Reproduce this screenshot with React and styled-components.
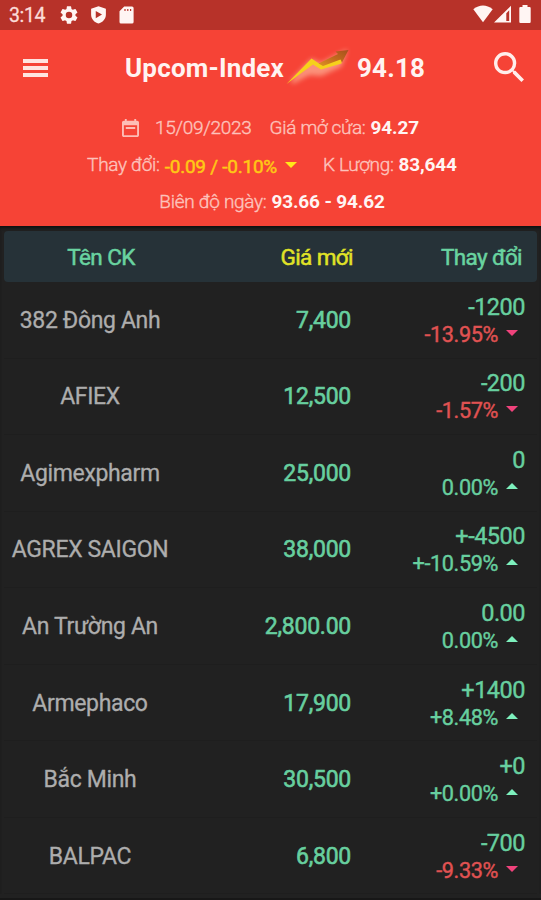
import React from 'react';
import styled, { createGlobalStyle } from 'styled-components';

const stocks = [
  { name: '382 Đông Anh', price: '7,400', change: '-1200', percent: '-13.95%', down: true },
  { name: 'AFIEX', price: '12,500', change: '-200', percent: '-1.57%', down: true },
  { name: 'Agimexpharm', price: '25,000', change: '0', percent: '0.00%' },
  { name: 'AGREX SAIGON', price: '38,000', change: '+-4500', percent: '+-10.59%' },
  { name: 'An Trường An', price: '2,800.00', change: '0.00', percent: '0.00%' },
  { name: 'Armephaco', price: '17,900', change: '+1400', percent: '+8.48%' },
  { name: 'Bắc Minh', price: '30,500', change: '+0', percent: '+0.00%' },
  { name: 'BALPAC', price: '6,800', change: '-700', percent: '-9.33%', down: true },
];

function TrendArrow() {
  return (
    <TrendSvg viewBox="0 0 66 44">
      <defs>
        <linearGradient id="shade" x1="0" y1="1" x2="1" y2="0">
          <stop offset="0" stopColor="#dd9322" />
          <stop offset="0.5" stopColor="#c26a1e" />
          <stop offset="1" stopColor="#a8501d" />
        </linearGradient>
        <filter id="glow" x="-20%" y="-30%" width="140%" height="170%">
          <feGaussianBlur stdDeviation="2.8" />
        </filter>
      </defs>
      <path
        d="M7 36 L27 15 L36 19 L59 7 L55 19 L36 28 L24 27 Z"
        fill="#ffc6a8"
        stroke="#ffc6a8"
        strokeWidth="4"
        opacity="0.6"
        filter="url(#glow)"
      />
      <path d="M1.5 38 L26.5 12.5 L34 17.5 L57 12 L56.5 17.5 L36 23.5 L28 18.5 Z" fill="#f6d11b" />
      <path d="M33.5 17.5 L53 8 L50.5 5.5 L63.5 4 L57 16.5 L55.5 13.5 L38 20 Z" fill="url(#shade)" />
    </TrendSvg>
  );
}

function App() {
  return (
    <Screen>
      <GlobalStyle />
      <StatusBar>
        <Clock>3:14</Clock>
        <StatusIcons>
          <StatusSvg viewBox="2 2 20 20" $w={18}>
            <path d="M19.14 12.94c.04-.3.06-.61.06-.94 0-.32-.02-.64-.07-.94l2.03-1.58a.49.49 0 0 0 .12-.61l-1.92-3.32a.488.488 0 0 0-.59-.22l-2.39.96c-.5-.38-1.03-.7-1.62-.94l-.36-2.54a.484.484 0 0 0-.48-.41h-3.84c-.24 0-.43.17-.47.41l-.36 2.54c-.59.24-1.13.57-1.62.94l-2.39-.96c-.22-.08-.47 0-.59.22L2.74 8.87c-.12.21-.08.47.12.61l2.03 1.58c-.05.3-.09.63-.09.94s.02.64.07.94l-2.03 1.58a.49.49 0 0 0-.12.61l1.92 3.32c.12.22.37.29.59.22l2.39-.96c.5.38 1.03.7 1.62.94l.36 2.54c.05.24.24.41.48.41h3.84c.24 0 .44-.17.47-.41l.36-2.54c.59-.24 1.13-.56 1.62-.94l2.39.96c.22.08.47 0 .59-.22l1.92-3.32c.12-.22.07-.47-.12-.61l-2.01-1.58zM12 15.6A3.6 3.6 0 1 1 12 8.4a3.6 3.6 0 0 1 0 7.2z" />
          </StatusSvg>
          <StatusSvg viewBox="0 0 17 19" $w={17}>
            <path
              fillRule="evenodd"
              d="M8.5 0.3 L16.3 3 V9 C16.3 13.8 12.8 17.4 8.5 18.6 C4.2 17.4 0.7 13.8 0.7 9 V3 Z M5.6 5.2 V13 L12.2 9.1 Z"
            />
          </StatusSvg>
          <StatusSvg viewBox="0 0 15 18" $w={15}>
            <path
              fillRule="evenodd"
              d="M5.2 0.5 H13 Q14.6 0.5 14.6 2 V16 Q14.6 17.5 13 17.5 H2 Q0.5 17.5 0.5 16 V5.3 Z M5.4 3 V5 H6.6 V3 Z M8.2 3 V5 H9.4 V3 Z M11 3 V5 H12.2 V3 Z"
            />
          </StatusSvg>
        </StatusIcons>
        <SignalIcons>
          <StatusSvg viewBox="0 0 20 18" $w={20}>
            <path d="M0.3 4.3 Q10 -3.2 19.7 4.3 L10 17.3 Z" />
          </StatusSvg>
          <StatusSvg viewBox="0 0 17 17" $w={17}>
            <path fillRule="evenodd" d="M0 17 L17 0.3 V17 Z M12.3 7.8 V15.4 H15.2 V4.8 Z" />
          </StatusSvg>
          <StatusSvg viewBox="0 0 12 18" $w={12}>
            <path d="M3.5 0 H8.5 V2 H10.6 Q11.7 2 11.7 3.2 V16.8 Q11.7 18 10.6 18 H1.4 Q0.3 18 0.3 16.8 V3.2 Q0.3 2 1.4 2 H3.5 Z" />
          </StatusSvg>
        </SignalIcons>
      </StatusBar>

      <Header>
        <TopBar>
          <MenuIcon>
            <MenuLine />
            <MenuLine />
            <MenuLine />
          </MenuIcon>
          <Title>
            <TitleText $w={160} $spacing={0.2}>Upcom-Index</TitleText>
            <TrendArrow />
            <TitleText $w={69} $spacing={0.2}>94.18</TitleText>
          </Title>
          <SearchSvg viewBox="3 3 17.5 17.5">
            <path d="M15.5 14h-.79l-.28-.27A6.47 6.47 0 0 0 16 9.5 6.5 6.5 0 1 0 9.5 16c1.61 0 3.09-.59 4.23-1.57l.27.28v.79l5 4.99L20.49 19l-4.99-5zm-6 0C7.01 14 5 11.99 5 9.5S7.01 5 9.5 5 14 7.01 14 9.5 11.99 14 9.5 14z" />
          </SearchSvg>
        </TopBar>
        <Details>
          <DetailLine>
            <CalendarSvg viewBox="3 1 18 20" preserveAspectRatio="none">
              <path d="M17 12H7v-2h10v2zm2-9h-1V1h-2v2H8V1H6v2H5c-1.11 0-2 .9-2 2v14c0 1.1.89 2 2 2h14c1.1 0 2-.9 2-2V5c0-1.1-.9-2-2-2zm0 16H5V8h14v11z" />
            </CalendarSvg>
            <Label>15/09/2023</Label>
            <Label $left={18}>Giá mở cửa:</Label>
            <Value>94.27</Value>
          </DetailLine>
          <DetailLine>
            <Label>Thay đổi:</Label>
            <Delta>-0.09 / -0.10%</Delta>
            <Triangle $down $color="#ffe81a" />
            <Label $left={26}>K Lượng:</Label>
            <Value>83,644</Value>
          </DetailLine>
          <DetailLine>
            <Label>Biên độ ngày:</Label>
            <Value>93.66 - 94.62</Value>
          </DetailLine>
        </Details>
      </Header>

      <Table>
        <TableHead>
          <HeadName>Tên CK</HeadName>
          <HeadPrice>Giá mới</HeadPrice>
          <HeadChange>Thay đổi</HeadChange>
        </TableHead>
        {stocks.map((stock) => (
          <Row key={stock.name}>
            <Name>{stock.name}</Name>
            <Price>{stock.price}</Price>
            <Change>
              <Amount>{stock.change}</Amount>
              <Percent $down={stock.down}>
                {stock.percent}
                <Triangle $down={stock.down} $color={stock.down ? '#f0437c' : '#7df0bd'} />
              </Percent>
            </Change>
          </Row>
        ))}
      </Table>
    </Screen>
  );
}

export default App;

const GlobalStyle = createGlobalStyle`
  * {
    box-sizing: border-box;
  }
  body {
    margin: 0;
    background: #212121;
  }
`;
const Screen = styled.div`
  width: 541px;
  height: 900px;
  overflow: hidden;
  display: flex;
  flex-direction: column;
  background: #212121;
  border-bottom: 2px solid #171717;
  font-family: Roboto, 'Liberation Sans', sans-serif;
  white-space: nowrap;
`;
const StatusBar = styled.div`
  height: 30px;
  flex: none;
  display: flex;
  align-items: center;
  padding: 0 9px;
  background: #b73229;
`;
const Clock = styled.span`
  width: 51px;
  padding-top: 1px;
  color: #fbdcd8;
  font-size: 19.5px;
  letter-spacing: -0.4px;
  line-height: 30px;
  -webkit-text-stroke: 0.3px;
`;
const StatusIcons = styled.div`
  display: flex;
  align-items: center;
  gap: 12px;
  padding-bottom: 1px;
`;
const SignalIcons = styled.div`
  display: flex;
  align-items: center;
  gap: 1px;
  margin-left: auto;
  margin-right: 1px;
  padding-bottom: 2px;

  svg:last-child {
    margin-left: 7px;
  }
`;
const StatusSvg = styled.svg`
  width: ${(props) => props.$w}px;
  height: 18px;
  fill: #fff5f3;
`;
const Header = styled.header`
  height: 196px;
  flex: none;
  background: #f64336;
`;
const TopBar = styled.div`
  height: 76px;
  display: flex;
  align-items: center;
  padding: 0 17px 0 23px;
`;
const MenuIcon = styled.div`
  width: 25px;
  display: flex;
  flex-direction: column;
  gap: 3px;
  margin-bottom: 1px;
`;
const MenuLine = styled.div`
  height: 4px;
  background: #ffe4e0;
`;
const Title = styled.div`
  display: flex;
  align-items: center;
  margin-left: 77px;
`;
const TitleText = styled.span`
  width: ${(props) => props.$w}px;
  color: #fff3f1;
  font-size: 26px;
  font-weight: bold;
  letter-spacing: ${(props) => props.$spacing || 0}px;
`;
const TrendSvg = styled.svg`
  width: 66px;
  height: 44px;
  margin-right: 6px;
`;
const SearchSvg = styled.svg`
  width: 30px;
  height: 30px;
  margin-left: auto;
  margin-bottom: 2px;
  fill: #ffeeeb;
`;
const Details = styled.div`
  display: flex;
  flex-direction: column;
  padding-top: 3px;
`;
const DetailLine = styled.div`
  height: 37px;
  display: flex;
  align-items: center;
  justify-content: center;
  padding-left: 3px;

  &:first-child {
    padding-left: 0;
  }
`;
const CalendarSvg = styled.svg`
  width: 17px;
  height: 18px;
  margin-right: 16px;
  fill: #fdbdb6;
`;
const Label = styled.span`
  margin-left: ${(props) => props.$left || 0}px;
  color: #fdc2bb;
  font-size: 19px;
  font-weight: 300;
  letter-spacing: -0.3px;
  -webkit-text-stroke: 0.4px;
`;
const Value = styled.span`
  margin-left: 5px;
  color: #fff5f3;
  font-size: 19px;
  font-weight: bold;
  letter-spacing: -0.15px;
`;
const Delta = styled.span`
  margin-left: 5px;
  padding-top: 4px;
  color: #ffc815;
  font-size: 19px;
  letter-spacing: -0.25px;
  -webkit-text-stroke: 0.5px;
`;
const Triangle = styled.i`
  width: 0;
  height: 0;
  margin-left: 8px;
  border: solid transparent;
  border-width: ${(props) => (props.$down ? '6px 6px 0' : '0 6px 6px')};
  border-top-color: ${(props) => (props.$down ? props.$color : 'transparent')};
  border-bottom-color: ${(props) => (props.$down ? 'transparent' : props.$color)};
`;
const Table = styled.main`
  display: flex;
  flex-direction: column;
  padding: 5px 4px 0;
  box-shadow: inset 0 3px 3px -1px #111;
`;
const TableHead = styled.div`
  height: 51px;
  flex: none;
  display: flex;
  align-items: center;
  padding: 0 15px 0 0;
  border-radius: 4px;
  background: #263238;
  color: #69d3a0;
  font-size: 22.5px;
  letter-spacing: -0.6px;
  -webkit-text-stroke: 0.5px;
`;
const HeadName = styled.span`
  width: 194px;
  text-align: center;
`;
const HeadPrice = styled.span`
  width: 155px;
  text-align: right;
  color: #e0e327;
`;
const HeadChange = styled.span`
  margin-left: auto;
`;
const Row = styled.div`
  height: 76.55px;
  flex: none;
  display: flex;
  align-items: center;
  padding: 1px 12px 0 0;
  border-bottom: 1px solid #1e1e1e;
`;
const Name = styled.span`
  width: 172px;
  text-align: center;
  color: #adadad;
  font-size: 23px;
  letter-spacing: -0.35px;
  -webkit-text-stroke: 0.3px;
`;
const Price = styled.span`
  width: 175px;
  text-align: right;
  color: #67cf9f;
  font-size: 23px;
  letter-spacing: -0.25px;
  -webkit-text-stroke: 0.6px;
`;
const Change = styled.div`
  margin-left: auto;
  padding-top: 1px;
  display: flex;
  flex-direction: column;
  align-items: flex-end;
`;
const Amount = styled.span`
  color: #67cf9f;
  font-size: 23.5px;
  letter-spacing: -0.5px;
  line-height: 28px;
  -webkit-text-stroke: 0.4px;
`;
const Percent = styled.span`
  display: flex;
  align-items: center;
  padding-right: 7px;
  color: ${(props) => (props.$down ? '#e05252' : '#67cf9f')};
  font-size: 21.7px;
  letter-spacing: -0.4px;
  line-height: 28px;
  -webkit-text-stroke: 0.4px;

  i {
    margin-bottom: 4px;
  }
`;
